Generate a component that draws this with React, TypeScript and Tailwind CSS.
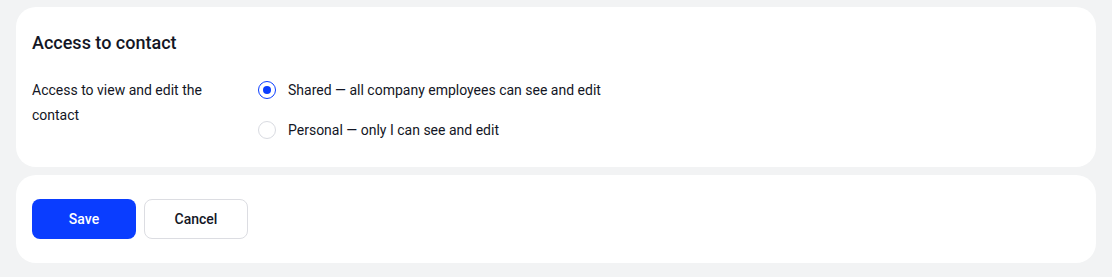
import { useState } from 'react';

type Access = 'shared' | 'personal';

const options: { value: Access; label: string }[] = [
  { value: 'shared', label: 'Shared — all company employees can see and edit' },
  { value: 'personal', label: 'Personal — only I can see and edit' },
];

function Radio({ checked }: { checked: boolean }) {
  return (
    <span
      className={`flex h-[18px] w-[18px] shrink-0 items-center justify-center rounded-full border-[1.5px] bg-white ${
        checked ? 'border-[#0a3dff]' : 'border-[#d9dbe1]'
      }`}
    >
      {checked && <span className="h-2 w-2 rounded-full bg-[#0a3dff]" />}
    </span>
  );
}

export default function App() {
  const [access, setAccess] = useState<Access>('shared');

  return (
    <div
      className="min-h-[277px] bg-[#f2f3f4] px-4 pt-[7px] pb-4 text-[#131625]"
      style={{ fontFamily: 'Roboto, "Liberation Sans", sans-serif' }}
    >
      {/* Access settings */}
      <div className="rounded-[20px] bg-white px-4 pt-6 pb-[28px]">
        <h2 className="text-[18px] leading-6 font-medium">Access to contact</h2>
        <div className="mt-[23px] flex">
          <div className="w-[216px] pr-4 text-sm leading-[25px]">
            Access to view and edit the contact
          </div>
          <div className="flex flex-col gap-[22px] pt-[3px] pl-[10px]">
            {options.map((o) => (
              <label
                key={o.value}
                className="flex cursor-pointer items-center gap-3 text-sm leading-[18px]"
                onClick={() => setAccess(o.value)}
              >
                <Radio checked={access === o.value} />
                <span>{o.label}</span>
              </label>
            ))}
          </div>
        </div>
      </div>

      {/* Actions */}
      <div className="mt-2 flex gap-2 rounded-[20px] bg-white px-4 py-6">
        <button className="h-10 w-[104px] rounded-lg bg-[#0a3dff] text-sm font-medium text-white">
          Save
        </button>
        <button className="h-10 w-[104px] rounded-lg border border-[#dcdde2] bg-white text-sm font-medium text-[#131625]">
          Cancel
        </button>
      </div>
    </div>
  );
}
